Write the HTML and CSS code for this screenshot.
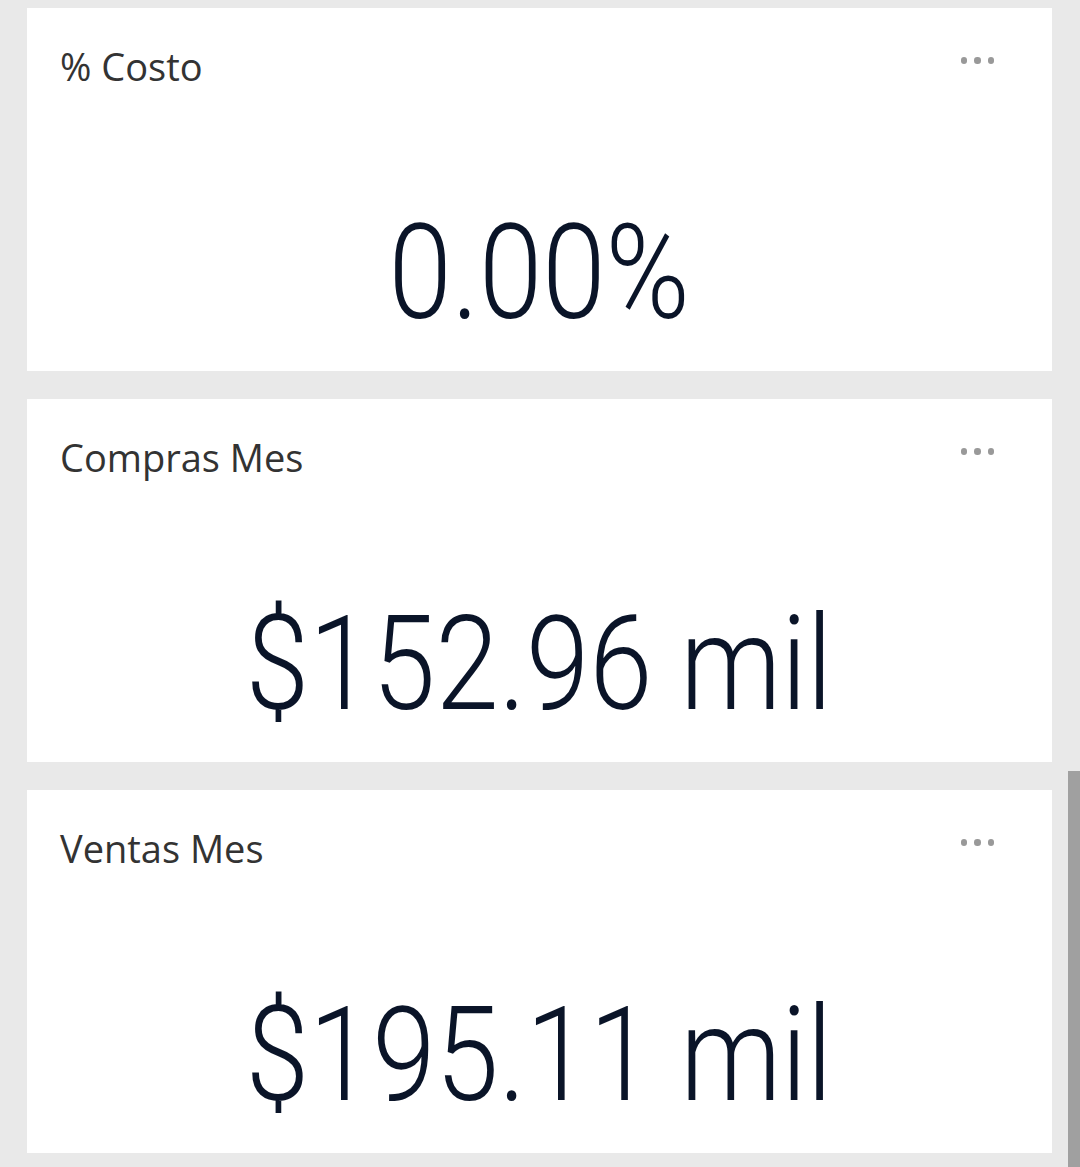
FILE: index.html
```html
<!DOCTYPE html>
<html lang="es">
<head>
    <meta charset="UTF-8">
    <meta name="viewport" content="width=device-width, initial-scale=1.0">
    <title>Tarjetas</title>
    <link rel="stylesheet" href="styles.css">
</head>
<body>

<div class="cards">
    <div class="card">
        <div class="card-head">
            <span class="card-title">% Costo</span>
            <span class="more"><i></i><i></i><i></i></span>
        </div>
        <div class="card-value"><span>0.00%</span></div>
    </div>

    <div class="card">
        <div class="card-head">
            <span class="card-title">Compras Mes</span>
            <span class="more"><i></i><i></i><i></i></span>
        </div>
        <div class="card-value"><span>$152.96 mil</span></div>
    </div>

    <div class="card">
        <div class="card-head">
            <span class="card-title">Ventas Mes</span>
            <span class="more"><i></i><i></i><i></i></span>
        </div>
        <div class="card-value"><span>$195.11 mil</span></div>
    </div>
</div>

<div class="scrollbar"></div>

</body>
</html>
```

FILE: styles.css
```css
body {
    margin: 0;
    background-color: #e9e9e9;
    font-family: "Open Sans", "Noto Sans", sans-serif;
    overflow: hidden;
}
.cards {
    display: flex;
    flex-direction: column;
    gap: 28px;
    padding: 8px 28px 14px 27px;
}
.card {
    background-color: #fff;
    height: 363px;
    box-sizing: border-box;
    display: flex;
    flex-direction: column;
    justify-content: space-between;
    padding: 31px 0 32px 0;
}
.card-head {
    display: flex;
    justify-content: space-between;
    align-items: flex-start;
    padding: 0 58px 0 33px;
}
.card-title {
    font-size: 38px;
    line-height: 54px;
    color: #333;
}
.more {
    display: flex;
    gap: 7px;
    margin-top: 18px;
}
.more i {
    width: 6.5px;
    height: 6.5px;
    border-radius: 50%;
    background-color: #999;
}
.card-value {
    text-align: center;
    font-family: Roboto, "Liberation Sans", sans-serif;
    font-weight: 300;
    font-size: 131px;
    line-height: 131px;
    color: #0a1428;
}
.card-value span {
    display: inline-block;
    transform: scaleX(0.87);
}
.scrollbar {
    position: fixed;
    right: 0;
    top: 771px;
    bottom: 0;
    width: 12px;
    background-color: #a0a0a0;
}
```
